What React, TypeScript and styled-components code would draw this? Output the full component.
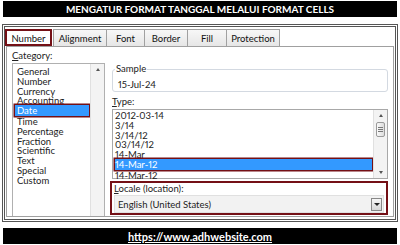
import React from "react";
import styled, { createGlobalStyle } from "styled-components";

const Global = createGlobalStyle`
  html, body { margin: 0; padding: 0; background: #fff; }
  body { font-family: Lato, "Open Sans", sans-serif; font-variant-numeric: proportional-nums; }
`;

const Page = styled.div`
  width: 400px;
  height: 245px;
  box-sizing: border-box;
  padding: 1px 3px 0 3px;
  display: flex;
  flex-direction: column;
`;

const Bar = styled.div`
  height: 16px;
  flex-shrink: 0;
  background: #000;
  color: #fff;
  font-family: Lato, sans-serif;
  font-weight: 700;
  font-size: 10px;
  display: flex;
  align-items: center;
  justify-content: center;
`;

const Link = styled.span`
  text-decoration: underline;
  font-size: 11px;
`;

const Dialog = styled.div`
  margin: 7px -1px 0 -1px;
  height: 198px;
  flex-shrink: 0;
  box-sizing: border-box;
  border: 3px double #555;
  background: #fff;
  padding: 1px 1px 2px 1px;
  display: flex;
  flex-direction: column;
`;

const Tabs = styled.div`
  display: flex;
  height: 17px;
  flex-shrink: 0;
  margin-top: 1px;
`;

const Tab = styled.div<{ $active?: boolean; $w: number }>`
  width: ${(p) => p.$w}px;
  box-sizing: border-box;
  height: 17px;
  font-size: 9.5px;
  color: #111;
  display: flex;
  align-items: center;
  justify-content: center;
  background: ${(p) => (p.$active ? "#fff" : "linear-gradient(#f7f7f7, #e6e6e6)")};
  border: 1px solid #a0a0a0;
  border-bottom: none;
  margin-left: -1px;
  margin-right: ${(p) => (p.$active ? "2px" : "0")};
  ${(p) => (p.$active ? "outline: 2px solid #741016; outline-offset: -2px; z-index: 1;" : "")}
`;

const Panel = styled.div`
  flex: 1;
  min-height: 0;
  border: 1px solid #a0a0a0;
  padding: 3px 5px 0 5px;
  display: grid;
  grid-template-columns: 93px 1fr;
  column-gap: 7px;
`;

const Col = styled.div`
  display: flex;
  flex-direction: column;
  & > * { flex-shrink: 0; }
`;

const Label = styled.div<{ $top?: number }>`
  font-size: 9.5px;
  color: #222;
  height: 12px;
  line-height: 12px;
  margin-top: ${(p) => p.$top ?? 0}px;
  u { text-decoration: underline; }
`;

const CatBox = styled.div`
  flex: 1 1 auto !important;
  border: 1px solid #b0b0b0;
  border-bottom: none;
  display: flex;
  margin-top: 1px;
`;

const Items = styled.div<{ $top: number }>`
  flex: 1;
  display: flex;
  flex-direction: column;
  padding-top: ${(p) => p.$top}px;
`;

const Item = styled.div<{ $sel?: boolean; $pad?: number }>`
  flex: 0 0 auto;
  height: 10px;
  line-height: 10px;
  margin-bottom: -0.2px;
  font-size: 9.5px;
  padding-left: ${(p) => p.$pad ?? 4}px;
  color: ${(p) => (p.$sel ? "#fff" : "#222")};
  white-space: nowrap;
  ${(p) =>
    p.$sel
      ? `background: #3399ff;
         box-shadow: 0 0 0 1.5px #741016;
         margin: -1px 1.5px 0.8px 1.5px;
         padding-top: 1px;
         padding-left: ${(p.$pad ?? 4) - 1.5}px;`
      : ""}
`;

const VScroll = styled.div`
  width: 13px;
  background: #f3f3f3;
  border-left: 1px solid #e0e0e0;
  display: flex;
  flex-direction: column;
  align-items: center;
`;

const Arrow = styled.div<{ $down?: boolean }>`
  margin-top: ${(p) => (p.$down ? "auto" : "4px")};
  margin-bottom: ${(p) => (p.$down ? "4px" : "0")};
  width: 0;
  height: 0;
  border-left: 2.5px solid transparent;
  border-right: 2.5px solid transparent;
  ${(p) => (p.$down ? "border-top: 3px solid #555;" : "border-bottom: 3px solid #555;")}
`;

const Thumb = styled.div`
  margin-top: 5px;
  width: 9px;
  height: 15px;
  box-sizing: border-box;
  border: 1px solid #9a9a9a;
  border-radius: 2px;
  background: linear-gradient(90deg, #fafafa, #dcdcdc);
  display: flex;
  flex-direction: column;
  align-items: center;
  justify-content: center;
  gap: 1px;
  span { width: 5px; height: 1px; background: #777; }
`;

const SampleBox = styled.fieldset`
  margin: 14px 0 0 0;
  padding: 0 0 0 5px;
  border: 1px solid #d3d9e1;
  border-radius: 3px;
  height: 28px;
  box-sizing: border-box;
  min-width: 0;
  legend {
    font-size: 9.5px;
    color: #222;
    padding: 0 1px;
    margin-left: -3px;
    line-height: 10px;
  }
`;

const SampleVal = styled.div`
  font-size: 9.5px;
  color: #222;
  line-height: 10px;
  margin-top: 6px;
`;

const TypeBox = styled.div`
  height: 70px;
  box-sizing: border-box;
  border: 1px solid #a8a8a8;
  display: flex;
  margin-top: 1px;
`;

const LocaleBox = styled.div`
  margin: 2px 0 0 -2px;
  border: 2px solid #741016;
  height: 34px;
  box-sizing: border-box;
  padding: 0 2px 0 2px;
`;

const Select = styled.div`
  height: 18px;
  box-sizing: border-box;
  border: 1px solid #e0e0e0;
  background: #f2f2f2;
  display: flex;
  align-items: center;
  font-size: 9.5px;
  color: #222;
  padding-left: 3px;
`;

const DropBtn = styled.div`
  margin-left: auto;
  width: 11px;
  height: 13px;
  margin-right: 1px;
  box-sizing: border-box;
  border: 1px solid #888;
  background: linear-gradient(#f6f6f6, #d6d6d6);
  display: flex;
  align-items: center;
  justify-content: center;
  &::after {
    content: "";
    border-left: 3px solid transparent;
    border-right: 3px solid transparent;
    border-top: 3px solid #222;
  }
`;

const Footer = styled(Bar)`
  margin-top: auto;
  margin-bottom: 1px;
`;

const cats = ["General", "Number", "Currency", "Accounting", "Date", "Time", "Percentage", "Fraction", "Scientific", "Text", "Special", "Custom"];
const types = ["2012-03-14", "3/14", "3/14/12", "03/14/12", "14-Mar", "14-Mar-12", "14-Mar-12"];
const tabs: [string, number][] = [["Number", 47], ["Alignment", 54], ["Font", 39], ["Border", 44], ["Fill", 40], ["Protection", 54]];

export default function App() {
  return (
    <Page>
      <Global />
      <Bar>MENGATUR FORMAT TANGGAL MELALUI FORMAT CELLS</Bar>
      <Dialog>
        <Tabs>
          {tabs.map(([t, w], i) => (
            <Tab key={t} $w={w} $active={i === 0}>{t}</Tab>
          ))}
        </Tabs>
        <Panel>
          <Col>
            <Label><u>C</u>ategory:</Label>
            <CatBox>
              <Items $top={3}>
                {cats.map((c) => (
                  <Item key={c} $sel={c === "Date"}>{c}</Item>
                ))}
              </Items>
              <VScroll>
                <Arrow />
              </VScroll>
            </CatBox>
          </Col>
          <Col>
            <SampleBox>
              <legend>Sample</legend>
              <SampleVal>15-Jul-24</SampleVal>
            </SampleBox>
            <Label $top={4}><u>T</u>ype:</Label>
            <TypeBox>
              <Items $top={1}>
                {types.map((t, i) => (
                  <Item key={`t${i}`} $pad={2} $sel={i === 5}>{t}</Item>
                ))}
              </Items>
              <VScroll>
                <Arrow />
                <Thumb><span /><span /><span /></Thumb>
                <Arrow $down />
              </VScroll>
            </TypeBox>
            <LocaleBox>
              <Label><u>L</u>ocale (location):</Label>
              <Select>
                English (United States)
                <DropBtn />
              </Select>
            </LocaleBox>
          </Col>
        </Panel>
      </Dialog>
      <Footer><Link>https://www.adhwebsite.com</Link></Footer>
    </Page>
  );
}
